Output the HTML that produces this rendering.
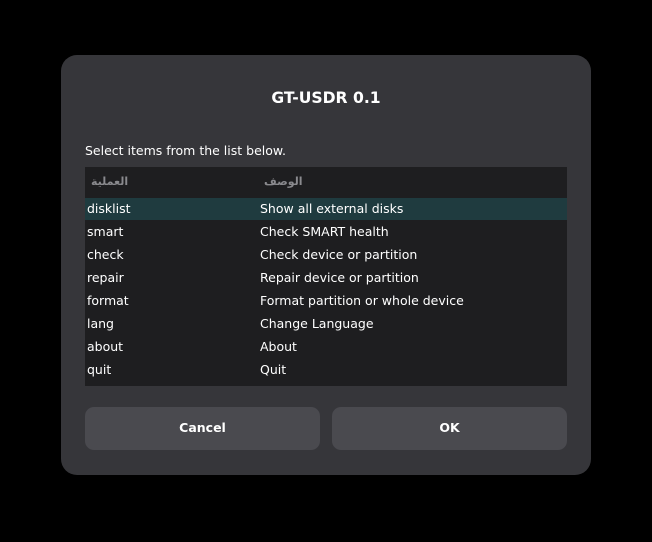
<!DOCTYPE html>
<html><head><meta charset="utf-8"><style>
body{margin:0;width:652px;height:542px;background:#000;font-family:"DejaVu Sans","Liberation Sans",sans-serif;position:relative;overflow:hidden}
.dlg{position:absolute;left:61px;top:55px;width:530px;height:420px;background:#36363a;border-radius:16px}
.title{position:absolute;left:0;right:0;top:89px;text-align:center;color:#fff;font-weight:bold;font-size:15.6px}
.lbl{position:absolute;left:85px;top:143px;color:#fff;font-size:12.5px}
.list{position:absolute;left:85px;top:167px;width:482px;height:219px;background:#1e1e20}
.hdr{position:absolute;top:8px;color:#8a8a8e;font-size:11px;font-weight:bold;font-family:"DejaVu Sans",sans-serif}
.row{position:absolute;left:0;width:482px;height:23px;color:#fff;font-size:12.5px;line-height:23px}
.row span{position:absolute}
.sel{background:#1f3b3f;height:22px;margin-top:1px;line-height:21px}
.btn{position:absolute;top:407px;width:235px;height:43px;background:#4a4a4f;border-radius:9px;color:#fff;font-weight:bold;font-size:12.5px;line-height:42px;text-align:center}
</style></head><body>
<div class="dlg"></div>
<div class="title">GT-USDR 0.1</div>
<div class="lbl">Select items from the list below.</div>
<div class="list">
<div class="hdr" style="left:6px">العملية</div>
<div class="hdr" style="left:179px">الوصف</div>
<div class="row sel" style="top:30px"><span style="left:2px">disklist</span><span style="left:175px">Show all external disks</span></div>
<div class="row" style="top:53px"><span style="left:2px">smart</span><span style="left:175px">Check SMART health</span></div>
<div class="row" style="top:76px"><span style="left:2px">check</span><span style="left:175px">Check device or partition</span></div>
<div class="row" style="top:99px"><span style="left:2px">repair</span><span style="left:175px">Repair device or partition</span></div>
<div class="row" style="top:122px"><span style="left:2px">format</span><span style="left:175px">Format partition or whole device</span></div>
<div class="row" style="top:145px"><span style="left:2px">lang</span><span style="left:175px">Change Language</span></div>
<div class="row" style="top:168px"><span style="left:2px">about</span><span style="left:175px">About</span></div>
<div class="row" style="top:191px"><span style="left:2px">quit</span><span style="left:175px">Quit</span></div>
</div>
<div class="btn" style="left:85px">Cancel</div>
<div class="btn" style="left:332px">OK</div>
</body></html>
